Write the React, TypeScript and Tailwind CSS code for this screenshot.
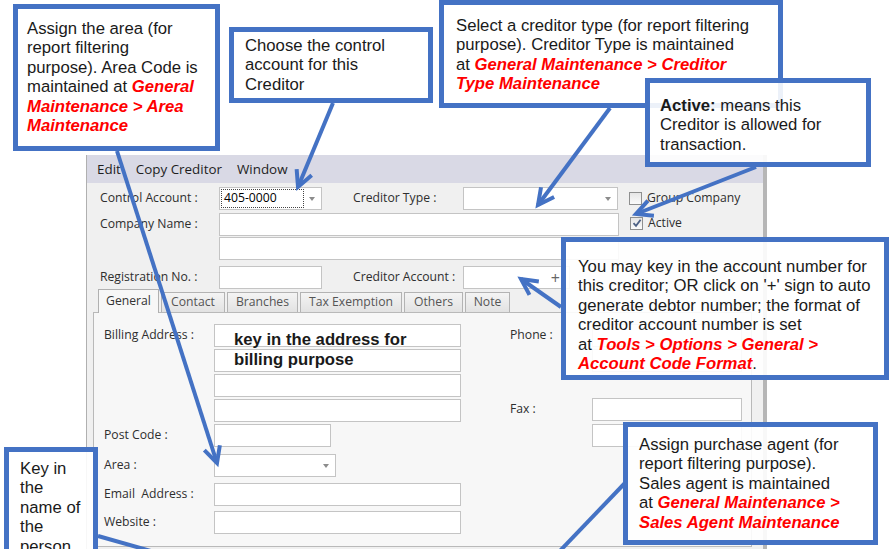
import React from "react";

type Pt = [number, number];

const connectors: { from: Pt; to: Pt; head: boolean }[] = [
  { from: [117, 151], to: [217, 463], head: true },
  { from: [333, 103], to: [298, 187], head: true },
  { from: [610, 108], to: [538, 205], head: true },
  { from: [756, 167], to: [636, 214], head: true },
  { from: [561, 307], to: [521, 279], head: true },
  { from: [625, 483], to: [556, 555], head: false },
  { from: [98, 536], to: [165, 555], head: false },
];

function Connector({ from, to, head }: { from: Pt; to: Pt; head: boolean }) {
  const angle = Math.atan2(to[1] - from[1], to[0] - from[0]);
  const wing = (d: number) =>
    `${to[0] - 18 * Math.cos(angle + d)},${to[1] - 18 * Math.sin(angle + d)}`;
  return (
    <g>
      <line x1={from[0]} y1={from[1]} x2={to[0]} y2={to[1]} />
      {head && <polyline points={`${wing(-0.47)} ${to[0]},${to[1]} ${wing(0.47)}`} fill="none" />}
    </g>
  );
}

function Red({ children }: { children: React.ReactNode }) {
  return <span className="font-bold italic text-[#ff0000]">{children}</span>;
}

function Callout({ className, children }: { className: string; children: React.ReactNode }) {
  return (
    <div
      className={`absolute border-[5px] border-[#4472c4] bg-white/90 font-['Liberation_Sans',Arial,sans-serif] text-[16.7px] leading-[19.4px] text-[#1a1a1a] ${className}`}
    >
      {children}
    </div>
  );
}

function Line({ children }: { children: React.ReactNode }) {
  return <div className="whitespace-nowrap">{children}</div>;
}

function Caret() {
  return <span className="border-x-[3.5px] border-t-[4px] border-x-transparent border-t-[#8c8c8c]" />;
}

function Box({ className = "" }: { className?: string }) {
  return <div className={`h-[23px] border border-[#c4c4c4] bg-white ${className}`} />;
}

function Check({ checked, label }: { checked?: boolean; label: string }) {
  return (
    <div className="flex items-center gap-[5px]">
      <span className="grid h-[13px] w-[13px] place-items-center border border-[#8e8f8f] bg-gradient-to-b from-[#e6e6e6] to-[#fbfbfb]">
        {checked && (
          <svg width="10" height="10" viewBox="0 0 10 10">
            <path d="M1.5 5.2 L4 7.8 L8.6 1.8" fill="none" stroke="#4d6185" strokeWidth="1.8" />
          </svg>
        )}
      </span>
      <span>{label}</span>
    </div>
  );
}

const tabs = [
  { label: "Contact", w: "w-[64px]" },
  { label: "Branches", w: "w-[71px]" },
  { label: "Tax Exemption", w: "w-[102px]" },
  { label: "Others", w: "w-[59px]" },
  { label: "Note", w: "w-[45px]" },
];

export default function App() {
  return (
    <div className="relative h-[549px] w-[893px] overflow-hidden bg-white pl-[86px] pt-[155px]">
      {/* creditor maintenance window */}
      <div className="h-[394px] w-[681px] border-l border-r-4 border-l-[#b0b0b0] border-r-[#b6b6b6] bg-[#f0f0f0] font-['Open_Sans',sans-serif] text-[12.2px] text-[#2e2e2e]">
        <div className="flex h-[28px] items-center gap-[15px] bg-[#d9d9e5] pl-[10px] text-[13.4px] text-[#1e1e1e]">
          <span>Edit</span>
          <span>Copy Creditor</span>
          <span>Window</span>
        </div>

        <div className="pl-[13px] pt-[4px]">
          <div className="flex h-[23px] items-center">
            <span className="w-[119px]">Control Account :</span>
            <div className="flex h-[23px] w-[103px] items-center border border-[#c4c4c4] bg-white pl-[1px] pr-[6px]">
              <div className="flex h-[19px] w-[83px] items-center border border-dotted border-[#444] pl-[2px] text-black">
                405-0000
              </div>
              <span className="ml-auto flex">
                <Caret />
              </span>
            </div>
            <span className="ml-[31px] w-[110px]">Creditor Type :</span>
            <div className="flex h-[23px] w-[155px] items-center justify-end border border-[#c4c4c4] bg-white pr-[6px]">
              <Caret />
            </div>
            <div className="ml-[11px]">
              <Check label="Group Company" />
            </div>
          </div>

          <div className="mt-[3px] flex h-[23px] items-center">
            <span className="w-[119px]">Company Name :</span>
            <Box className="w-[400px]" />
            <div className="ml-[11px] self-start pt-[1px]">
              <Check checked label="Active" />
            </div>
          </div>

          <div className="mt-[1px] flex h-[23px] items-center">
            <span className="w-[119px]" />
            <Box className="w-[400px]" />
          </div>

          <div className="mt-[6px] flex h-[23px] items-center">
            <span className="w-[119px]">Registration No. :</span>
            <Box className="w-[103px]" />
            <span className="ml-[31px] w-[110px]">Creditor Account :</span>
            <div className="flex h-[23px] w-[107px] items-center justify-end border border-[#c4c4c4] bg-white pr-[9px] text-[16px] text-[#666]">
              +
            </div>
          </div>
        </div>

        <div className="ml-[6px]">
          <div className="flex h-[23px] items-end gap-[2px] pl-[5px]">
            <div className="relative z-10 -mb-px flex h-[24px] w-[61px] items-center justify-center border border-b-0 border-[#b0b0b0] bg-[#f7f7f7] text-[#333]">
              General
            </div>
            {tabs.map((t) => (
              <div
                key={t.label}
                className={`flex h-[20px] items-center justify-center border border-b-0 border-[#b3b3b3] bg-gradient-to-b from-[#f4f4f4] to-[#e2e2e2] text-[#555] ${t.w}`}
              >
                {t.label}
              </div>
            ))}
          </div>

          <div className="relative flex h-[235px] w-[659px] border border-[#b9b9b9] bg-[#f7f7f7] pl-[10px] pt-[11px]">
            <div className="w-[357px]">
              <div className="flex items-center">
                <span className="w-[110px]">Billing Address :</span>
                <Box className="w-[247px]" />
              </div>
              <Box className="ml-[110px] mt-[2px] w-[247px]" />
              <Box className="ml-[110px] mt-[2px] w-[247px]" />
              <Box className="ml-[110px] mt-[2px] w-[247px]" />
              <div className="mt-[2px] flex items-center">
                <span className="w-[110px]">Post Code :</span>
                <Box className="w-[117px]" />
              </div>
              <div className="mt-[7px] flex items-center">
                <span className="w-[110px]">Area :</span>
                <div className="flex h-[23px] w-[122px] items-center justify-end border border-[#c4c4c4] bg-white pr-[6px]">
                  <Caret />
                </div>
              </div>
              <div className="mt-[6px] flex items-center">
                <span className="w-[110px]">Email&nbsp; Address :</span>
                <Box className="w-[247px]" />
              </div>
              <div className="mt-[5px] flex items-center">
                <span className="w-[110px]">Website :</span>
                <Box className="w-[247px]" />
              </div>
            </div>

            <div className="ml-[49px] w-[232px]">
              <div className="flex items-center">
                <span className="w-[82px]">Phone :</span>
                <Box className="w-[150px]" />
              </div>
              <Box className="ml-[82px] mt-[2px] w-[150px]" />
              <div className="mt-[26px] flex items-center">
                <span className="w-[82px]">Fax :</span>
                <Box className="w-[150px]" />
              </div>
              <Box className="ml-[82px] mt-[3px] w-[150px]" />
            </div>

            <div className="absolute left-[140px] top-[17px] font-['Liberation_Sans',Arial,sans-serif] text-[16.7px] font-bold leading-[20px] text-[#1a1a1a]">
              <div>key in the address for</div>
              <div>billing purpose</div>
            </div>
          </div>
        </div>
      </div>

      {/* connector lines */}
      <svg
        className="pointer-events-none absolute left-0 top-0"
        width="893"
        height="549"
        viewBox="0 0 893 549"
        stroke="#4472c4"
        strokeWidth="4"
        strokeLinecap="butt"
      >
        {connectors.map((c, i) => (
          <Connector key={i} {...c} />
        ))}
      </svg>

      {/* callouts */}
      <Callout className="left-[13px] top-[4px] h-[147px] w-[207px] bg-white pl-[9px] pt-[10px]">
        <Line>Assign the area (for</Line>
        <Line>report filtering</Line>
        <Line>purpose). Area Code is</Line>
        <Line>
          maintained at <Red>General</Red>
        </Line>
        <Line>
          <Red>Maintenance &gt; Area</Red>
        </Line>
        <Line>
          <Red>Maintenance</Red>
        </Line>
      </Callout>

      <Callout className="left-[229px] top-[27px] h-[76px] w-[204px] pl-[11px] pt-[4px]">
        <Line>Choose the control</Line>
        <Line>account for this</Line>
        <Line>Creditor</Line>
      </Callout>

      <Callout className="left-[439px] top-0 h-[108px] w-[344px] pl-[12px] pt-[11px]">
        <Line>Select a creditor type (for report filtering</Line>
        <Line>purpose). Creditor Type is maintained</Line>
        <Line>
          at <Red>General Maintenance &gt; Creditor</Red>
        </Line>
        <Line>
          <Red>Type Maintenance</Red>
        </Line>
      </Callout>

      <Callout className="left-[645px] top-[78px] h-[89px] w-[226px] pl-[10px] pt-[13px]">
        <Line>
          <span className="font-bold">Active:</span> means this
        </Line>
        <Line>Creditor is allowed for</Line>
        <Line>transaction.</Line>
      </Callout>

      <Callout className="left-[561px] top-[237px] h-[143px] w-[328px] pl-[12px] pt-[15px]">
        <Line>You may key in the account number for</Line>
        <Line>this creditor; OR click on '+' sign to auto</Line>
        <Line>generate debtor number; the format of</Line>
        <Line>creditor account number is set</Line>
        <Line>
          at <Red>Tools &gt; Options &gt; General &gt;</Red>
        </Line>
        <Line>
          <Red>Account Code Format</Red>.
        </Line>
      </Callout>

      <Callout className="left-[623px] top-[422px] h-[123px] w-[255px] pl-[11px] pt-[8px]">
        <Line>Assign purchase agent (for</Line>
        <Line>report filtering purpose).</Line>
        <Line>Sales agent is maintained</Line>
        <Line>
          at <Red>General Maintenance &gt;</Red>
        </Line>
        <Line>
          <Red>Sales Agent Maintenance</Red>
        </Line>
      </Callout>

      <Callout className="left-[4px] top-[447px] h-[130px] w-[94px] pl-[11px] pt-[7px]">
        <Line>Key in</Line>
        <Line>the</Line>
        <Line>name of</Line>
        <Line>the</Line>
        <Line>person</Line>
      </Callout>
    </div>
  );
}
